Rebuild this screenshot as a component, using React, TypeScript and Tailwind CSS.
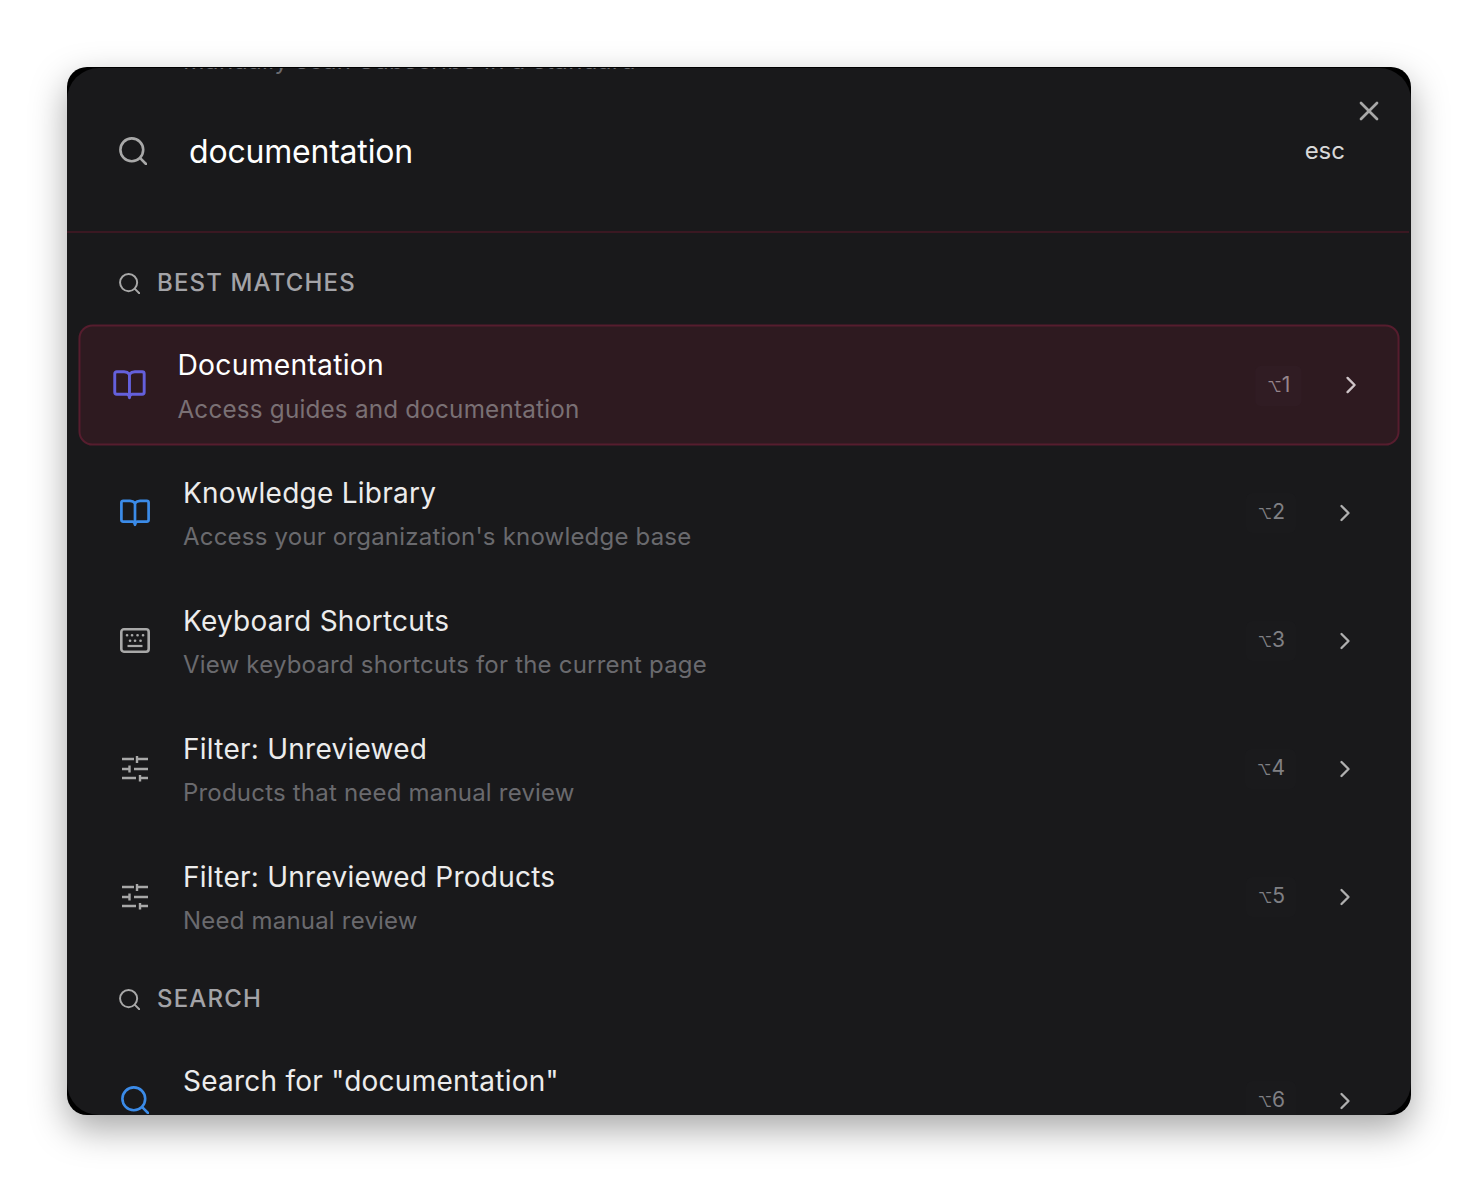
import React from "react";
import { ChevronRight, X } from "lucide-react";

const SearchIcon = ({ className }: { className: string }) => (
    <svg viewBox="0 0 28 28" fill="none" stroke="currentColor" strokeWidth="2.6" strokeLinecap="round" className={className}>
        <circle cx="12.8" cy="12.8" r="11.400" />
        <path d="M21.200 21.200L27 27" />
    </svg>
);

const BookIcon = ({ className }: { className: string }) => (
    <svg viewBox="0 0 30 28" fill="none" stroke="currentColor" strokeWidth="2.7" strokeLinejoin="round" strokeLinecap="round" className={className}>
        <path d="M15 4C13.800 2.600 12 1.800 10 1.800H3.200A1.800 1.800 0 0 0 1.400 3.600V20.800A1.800 1.800 0 0 0 3.200 22.600H12.500C14 22.600 15 24 15 25.800C15 24 16 22.600 17.500 22.600H26.800A1.800 1.800 0 0 0 28.600 20.800V3.600A1.800 1.800 0 0 0 26.800 1.800H20C18 1.800 16.200 2.600 15 4Z" />
        <path d="M15 4V25" />
    </svg>
);

const KeyboardIcon = ({ className }: { className: string }) => (
    <svg viewBox="0 0 30 25" fill="none" stroke="currentColor" strokeWidth="2.6" strokeLinecap="round" className={className}>
        <rect x="1.300" y="1.300" width="27.400" height="22.400" rx="2.600" />
        <path d="M7 7.200h.1M12 7.200h.1M17.500 7.200h.1M23 7.200h.1M10 12.700h.1M15 12.700h.1M20.500 12.700h.1" />
        <path d="M7.500 18h15" strokeWidth="2.200" strokeLinecap="butt" />
    </svg>
);

const SlidersIcon = ({ className }: { className: string }) => (
    <svg viewBox="0 0 28 27" fill="none" stroke="currentColor" strokeWidth="2.400" className={className}>
        <path d="M1 4H13M16 1V8M16 4H27" />
        <path d="M1 14H8.500M8.500 10.500V17.500M13 14H27" />
        <path d="M1 23H15M19 20V26.500M19 23H27" />
    </svg>
);

const rows = [
    { title: "Knowledge Library", sub: "Access your organization's knowledge base", key: "2", icon: <BookIcon className="w-[30px] h-[28px] mt-px shrink-0 text-[#3b8be8]" /> },
    { title: "Keyboard Shortcuts", sub: "View keyboard shortcuts for the current page", key: "3", icon: <KeyboardIcon className="w-[30px] h-[25px] mt-px shrink-0 text-[#a8a8a8]" /> },
    { title: "Filter: Unreviewed", sub: "Products that need manual review", key: "4", icon: <SlidersIcon className="w-[28px] h-[27px] shrink-0 text-[#a8a8a8]" /> },
    { title: "Filter: Unreviewed Products", sub: "Need manual review", key: "5", icon: <SlidersIcon className="w-[28px] h-[27px] shrink-0 text-[#a8a8a8]" /> },
];

const Row = ({ title, sub, shortcut, icon, active }: { title: string; sub: string; shortcut: string; icon: React.ReactNode; active?: boolean }) => (
    <div
        className={
            active
                ? "flex items-center h-[120px] -mb-px pl-[33px] pr-[32px] rounded-[14px] border-2 border-[#561d2e] bg-[#2e1a20] scale-[1.01]"
                : "flex items-center h-[120px] pl-[35px] pr-[34px]"
        }
    >
        <div className="w-[30px] flex justify-center shrink-0">{icon}</div>
        <div className={"ml-[33px] flex-1 min-w-0 " + (active ? "pt-px" : "pt-[3px]")}>
            <div className={"text-[28px] leading-[38px] tracking-[0.25px] " + (active ? "text-white" : "text-[#ececec]")}>{title}</div>
            <div className={"text-[24px] leading-[32px] tracking-[0.2px] " + (active ? "mt-[10px] text-[#7a7074]" : "mt-[9px] text-[#6a6a6e]")}>{sub}</div>
        </div>
        <kbd className={"flex items-baseline mt-[2px] pl-3 pr-[11px] py-1 rounded-md font-['Inter',sans-serif] text-[21px] leading-[30px] " + (active ? "bg-[#301c23] text-[#95858b]" : "bg-[#1a1a1c] text-[#808084]")}>
            <span className="text-[14px] font-medium">⌥</span>
            {shortcut}
        </kbd>
        <ChevronRight className={"ml-[35px] w-7 h-7 " + (active ? "text-[#cfc5c8]" : "mt-px text-[#b0b0b0]")} />
    </div>
);

const SectionHead = ({ label, className }: { label: string; className: string }) => (
    <div className={"flex items-center h-[34px] pl-[52px] " + className}>
        <SearchIcon className="w-[21px] h-[21px] text-[#a8a8a8]" />
        <span className="ml-[17px] text-[24px] leading-[34px] font-medium tracking-[1.15px] text-[#a3a3a7]">{label}</span>
    </div>
);

export default function App() {
    return (
        <div className="w-[1478px] h-[1182px] bg-white p-[67px] font-['Inter',sans-serif]">
            <div className="w-[1344px] h-[1048px] rounded-[20px] bg-black overflow-hidden shadow-[0_14px_36px_rgba(0,0,0,0.35)]">
                <div className="relative w-full h-[1047px] mt-px rounded-[32px] bg-[#19191b] overflow-hidden">
                    <div className="absolute left-[116px] top-[-20px] text-[24px] leading-[26px] tracking-[0.4px] text-[#6a6a6e] whitespace-nowrap">
                        Manually scan Subscribe in a standard
                    </div>
                    <button className="absolute right-[26px] top-[27px] text-[#a8a8a8]">
                        <X className="w-8 h-8" />
                    </button>
                    <div className="flex items-center h-[165px] mr-[2px] pt-[5px] pl-[52px] pr-[64px] border-b-2 border-[#3a1822]">
                        <SearchIcon className="w-[28px] h-[28px] -mt-[2px] text-[#a8a8a8]" />
                        <span className="ml-[42px] flex-1 text-[32px] leading-[44px] tracking-[-0.2px] text-white">documentation</span>
                        <span className="-mt-[2px] text-[24px] leading-[32px] text-[#d8d8d8]">esc</span>
                    </div>
                    <SectionHead label="BEST MATCHES" className="mt-[33px] mb-[25px]" />
                    <div className="flex flex-col gap-2 px-[18px]">
                        <Row
                            active
                            title="Documentation"
                            sub="Access guides and documentation"
                            shortcut="1"
                            icon={<BookIcon className="w-[33px] h-[30px] shrink-0 text-[#6460dc]" />}
                        />
                        {rows.map((r) => (
                            <Row key={r.key} title={r.title} sub={r.sub} shortcut={r.key} icon={r.icon} />
                        ))}
                    </div>
                    <SectionHead label="SEARCH" className="mt-[26px] mb-[24px]" />
                    <div className="px-[18px]">
                        <Row
                            title={'Search for "documentation"'}
                            sub="Search all products and pages"
                            shortcut="6"
                            icon={<SearchIcon className="w-[28px] h-[28px] text-[#3b8be8]" />}
                        />
                    </div>
                </div>
            </div>
        </div>
    );
}
